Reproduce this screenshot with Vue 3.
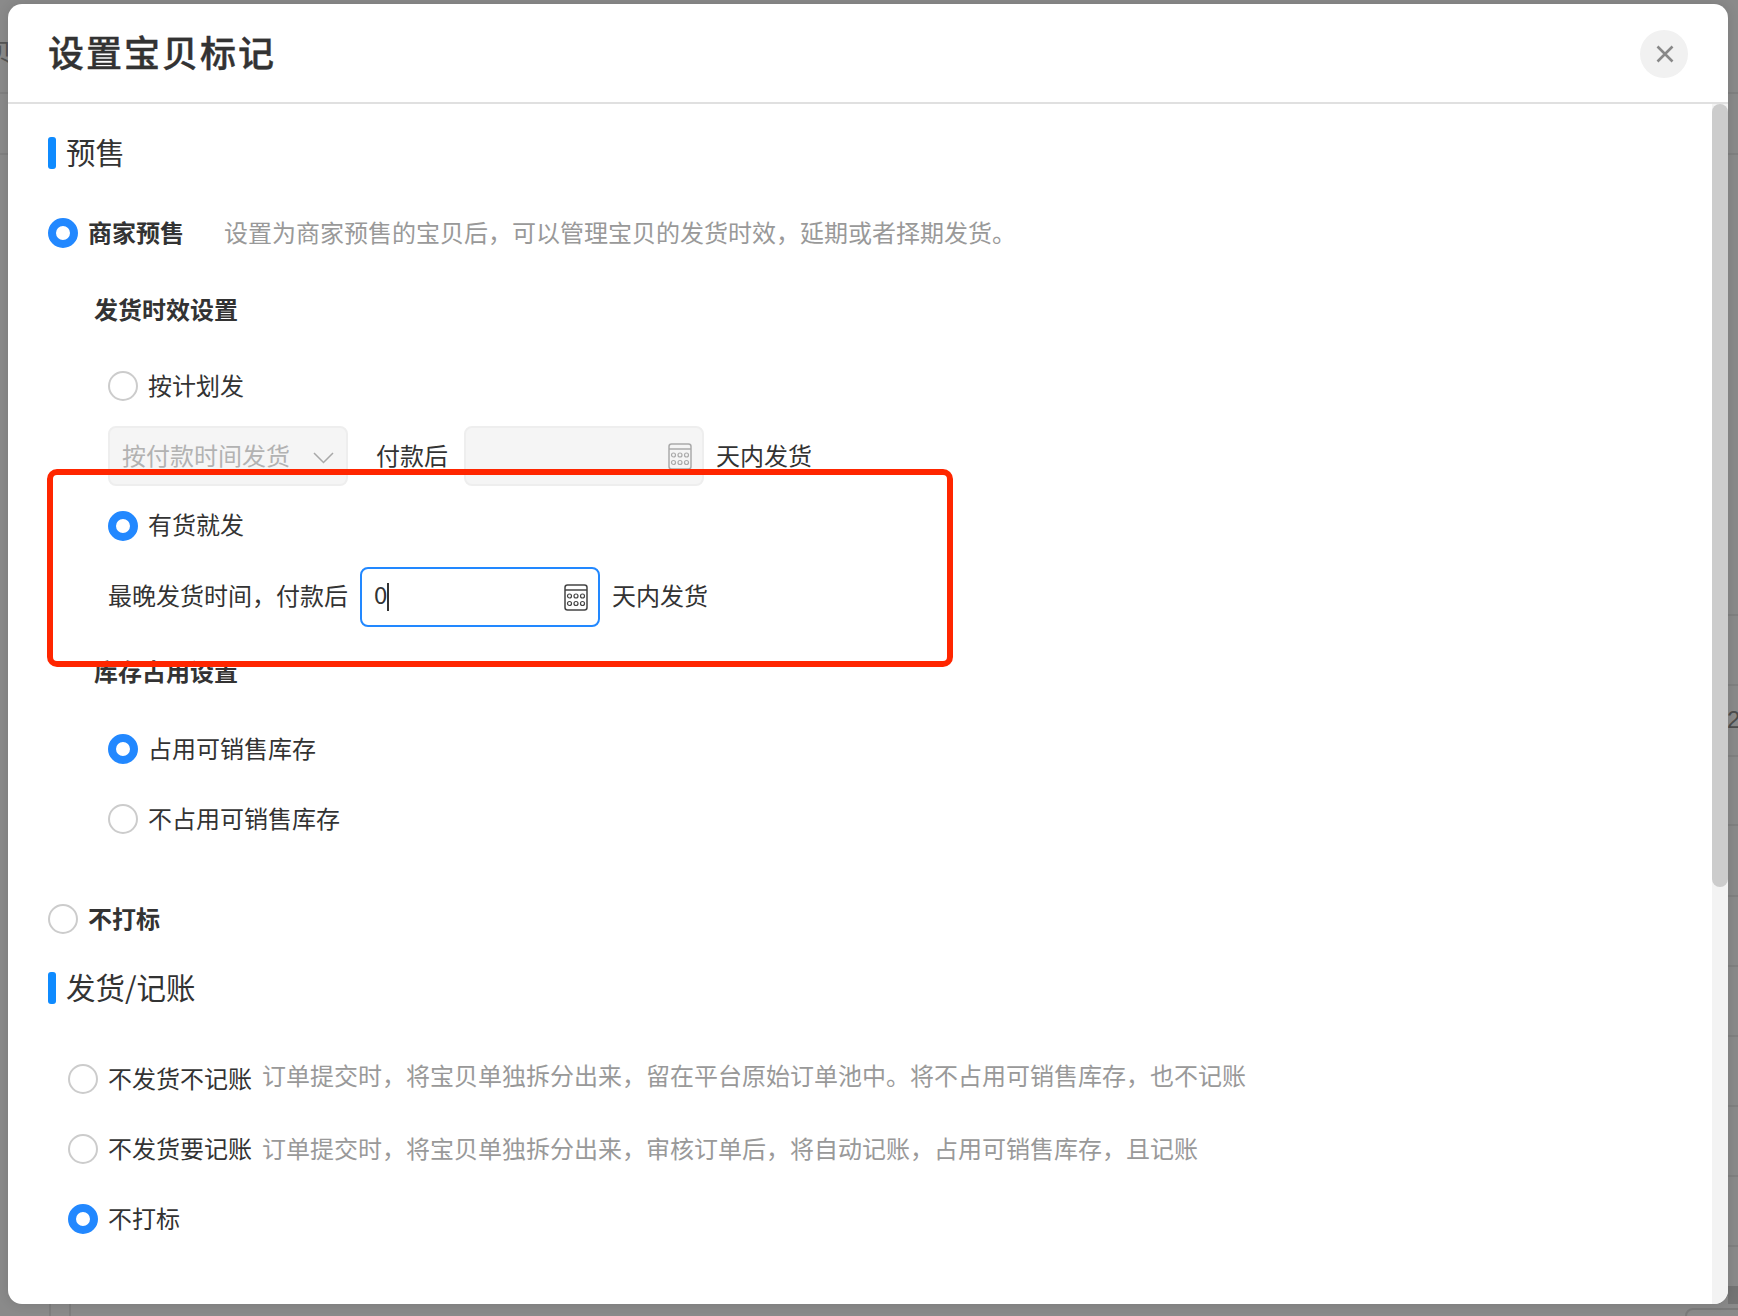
<script setup>
const fullLines = [92, 153]
const rightLines = [614, 684, 755, 824, 895, 965, 1035, 1105, 1175, 1245]
</script>

<template>
  <div class="page">
    <div class="backdrop">
      <div v-for="y in fullLines" :key="y" class="bg-line" :style="{ top: y + 'px' }"></div>
      <div v-for="y in rightLines" :key="y" class="bg-line right" :style="{ top: y + 'px' }"></div>
      <span class="bg-left">贝</span>
      <span class="bg-right">2</span>
      <div class="bg-band"></div>
      <div class="bg-vline one"></div>
      <div class="bg-vline two"></div>
      <div class="bg-box"></div>
    </div>

    <div class="modal">
      <header class="head">
        <h1 class="title">设置宝贝标记</h1>
        <div class="close">
          <svg width="18" height="18" viewBox="0 0 18 18"><path d="M1.500 1.500l15 15M16.500 1.500l-15 15" stroke="#888" stroke-width="2.600" fill="none"/></svg>
        </div>
      </header>

      <div class="body">
        <div class="content">
          <h2 class="section first"><i class="bar"></i><span>预售</span></h2>

          <div class="row merchant flat">
            <span class="radio on"></span>
            <b class="strong">商家预售</b>
            <span class="desc intro">设置为商家预售的宝贝后，可以管理宝贝的发货时效，延期或者择期发货。</span>
          </div>

          <div class="sub ship-title">发货时效设置</div>

          <div class="group">
            <div class="row plan flat"><span class="radio"></span><span>按计划发</span></div>
            <div class="fields disabled-row">
              <div class="select">
                <span>按付款时间发货</span>
                <svg class="chev" width="21" height="12" viewBox="0 0 21 12"><path d="M1 1l9.500 9.500L20 1" stroke="#a8a8a8" stroke-width="1.500" fill="none"/></svg>
              </div>
              <span class="after-select">付款后</span>
              <div class="box disabled">
                <svg class="cal" width="24" height="27" viewBox="0 0 24 27" fill="none" stroke="#aaa" stroke-width="1.500"><rect x="1" y="1" width="22" height="25" rx="2.500"/><path d="M1 6h22"/><circle cx="5.500" cy="12" r="2" stroke-width="1.200"/><circle cx="12" cy="12" r="2" stroke-width="1.200"/><circle cx="18.500" cy="12" r="2" stroke-width="1.200"/><circle cx="5.500" cy="19.500" r="2" stroke-width="1.200"/><circle cx="12" cy="19.500" r="2" stroke-width="1.200"/><circle cx="18.500" cy="19.500" r="2" stroke-width="1.200"/></svg>
              </div>
              <span class="tail">天内发货</span>
            </div>

            <div class="row instock"><span class="radio on"></span><span>有货就发</span></div>
            <div class="fields latest">
              <span>最晚发货时间，付款后</span>
              <div class="box focus">
                <span class="value">0</span><i class="caret"></i>
                <svg class="cal" width="24" height="27" viewBox="0 0 24 27" fill="none" stroke="#444" stroke-width="1.500"><rect x="1" y="1" width="22" height="25" rx="2.500"/><path d="M1 6h22"/><circle cx="5.500" cy="12" r="2" stroke-width="1.200"/><circle cx="12" cy="12" r="2" stroke-width="1.200"/><circle cx="18.500" cy="12" r="2" stroke-width="1.200"/><circle cx="5.500" cy="19.500" r="2" stroke-width="1.200"/><circle cx="12" cy="19.500" r="2" stroke-width="1.200"/><circle cx="18.500" cy="19.500" r="2" stroke-width="1.200"/></svg>
              </div>
              <span class="tail">天内发货</span>
            </div>
          </div>

          <div class="sub stock-title">库存占用设置</div>

          <div class="group">
            <div class="row stock-a"><span class="radio on"></span><span>占用可销售库存</span></div>
            <div class="row stock-b"><span class="radio"></span><span>不占用可销售库存</span></div>
          </div>

          <div class="row nomark"><span class="radio"></span><b class="strong">不打标</b></div>

          <h2 class="section second"><i class="bar"></i><span>发货/记账</span></h2>

          <div class="acct">
            <div class="row acct-a">
              <span class="radio"></span><span>不发货不记账</span>
              <span class="desc note lift">订单提交时，将宝贝单独拆分出来，留在平台原始订单池中。将不占用可销售库存，也不记账</span>
            </div>
            <div class="row acct-b">
              <span class="radio"></span><span>不发货要记账</span>
              <span class="desc note">订单提交时，将宝贝单独拆分出来，审核订单后，将自动记账，占用可销售库存，且记账</span>
            </div>
            <div class="row acct-b"><span class="radio on"></span><span>不打标</span></div>
          </div>
        </div>

        <div class="track"><div class="thumb"></div></div>
      </div>

      <div class="callout"></div>
    </div>
  </div>
</template>

<style>
html, body { margin: 0; background: #8a8a8a; }
</style>

<style scoped>
.page {
  position: relative;
  width: 1738px;
  height: 1316px;
  box-sizing: border-box;
  padding: 4px 10px 12px 8px;
  overflow: hidden;
  background: #8a8a8a;
  font-family: "Noto Sans CJK SC", "Liberation Sans", sans-serif;
  font-size: 24px;
  color: #333;
}
.backdrop { position: absolute; inset: 0; }
.bg-line { position: absolute; left: 0; right: 0; height: 2px; background: #808080; }
.bg-line.right { left: 1728px; }
.bg-left { position: absolute; left: -12px; top: 36px; color: #555; font-size: 24px; line-height: 30px; }
.bg-right { position: absolute; left: 1727px; top: 705px; color: #4d4d4d; font: 24px/30px "Liberation Sans", sans-serif; }
.bg-band { position: absolute; left: 1728px; right: 0; top: 1286px; height: 18px; background: #747474; }
.bg-vline { position: absolute; top: 1304px; bottom: 0; width: 2px; background: #7e7e7e; }
.bg-vline.one { left: 49px; }
.bg-vline.two { left: 69px; }
.bg-box { position: absolute; left: 1685px; top: 1308px; width: 70px; height: 30px; border: 2px solid #7a7a7a; border-radius: 8px; }

.modal {
  position: relative;
  width: 1720px;
  height: 1300px;
  display: flex;
  flex-direction: column;
  background: #fff;
  border-radius: 14px;
  overflow: hidden;
  box-shadow: 0 0 12px rgba(0, 0, 0, 0.12);
}
.head {
  flex: none;
  height: 98px;
  box-sizing: content-box;
  border-bottom: 2px solid #e0e0e0;
  padding: 0 40px;
  display: flex;
  align-items: center;
  justify-content: space-between;
}
.title {
  margin: 0 0 4px;
  font-size: 36px;
  font-weight: 500;
  letter-spacing: 2px;
  color: #333;
  -webkit-text-stroke: 0.4px #333;
}
.close {
  width: 48px;
  height: 48px;
  margin-top: 2px;
  border-radius: 50%;
  background: #f1f1f1;
  display: flex;
  align-items: center;
  justify-content: center;
}
.close svg { margin-left: 2px; }
.body { position: relative; flex: 1; overflow: hidden; }
.content { padding-left: 40px; }
.section {
  margin: 0;
  height: 32px;
  display: flex;
  align-items: center;
  gap: 10px;
  font-size: 29.5px;
  font-weight: 400;
  line-height: 32px;
}
.section > span { margin-bottom: 5px; }
.section.first { margin-top: 33px; }
.section.second { margin-top: 38px; }
.bar { width: 8px; height: 32px; border-radius: 3px; background: #0f8bff; }
.row { display: flex; align-items: center; height: 30px; line-height: 30px; white-space: nowrap; }
.row > :not(.radio) { margin-bottom: 3px; }
.row.flat > :not(.radio) { margin-bottom: 2px; }
.row.instock > :not(.radio) { margin-bottom: 5px; }
.radio {
  flex: none;
  box-sizing: border-box;
  width: 30px;
  height: 30px;
  margin-right: 10px;
  border: 2px solid #ccc;
  border-radius: 50%;
  background: #fff;
}
.radio.on { border: 8px solid #2288ff; }
.strong { font-weight: 700; }
.desc { color: #999; }
.intro { margin-left: 40px; }
.note { margin-left: 10px; }
.row > .note.lift { margin-bottom: 9px; }
.merchant { margin-top: 49px; }
.sub { margin-left: 46px; font-weight: 700; line-height: 30px; height: 30px; }
.ship-title { margin-top: 46px; }
.stock-title { margin-top: 29px; }
.group { margin-left: 60px; }
.plan { margin-top: 47px; }
.fields { display: flex; align-items: center; white-space: nowrap; }
.disabled-row { margin-top: 25px; }
.disabled-row .select > span,
.disabled-row > span { margin-bottom: 4px; }
.instock { margin-top: 25px; }
.latest { margin-top: 26px; }
.latest > span, .latest .value { margin-bottom: 6px; }
.select, .box {
  position: relative;
  box-sizing: border-box;
  width: 240px;
  height: 60px;
  border-radius: 8px;
}
.select {
  display: flex;
  align-items: center;
  justify-content: space-between;
  padding: 0 12px;
  background: #f5f5f5;
  border: 2px solid #eee;
  color: #b2b2b2;
}
.chev { margin-top: 4px; }
.after-select { margin: 0 16px 0 28px; }
.box.disabled { background: #f5f5f5; border: 2px solid #eee; }
.box.focus { margin-left: 12px; border: 2px solid #2288ff; padding-left: 12px; display: flex; align-items: center; }
.value { line-height: 30px; }
.caret { width: 2px; height: 28px; background: #333; }
.cal { position: absolute; right: 10px; top: 15px; }
.tail { margin-left: 12px; }
.stock-a { margin-top: 48px; }
.stock-b { margin-top: 40px; }
.nomark { margin-top: 70px; }
.acct { margin-left: 20px; }
.acct-a { margin-top: 60px; }
.acct-b { margin-top: 40px; }
.track { position: absolute; right: 0; top: 0; bottom: 0; width: 16px; background: #f3f3f3; }
.thumb { width: 16px; height: 783px; border-radius: 8px; background: #ccc; }
.callout {
  position: absolute;
  left: 39px;
  top: 465px;
  width: 906px;
  height: 198px;
  box-sizing: border-box;
  border: 6px solid #ff2600;
  border-radius: 10px;
  pointer-events: none;
}
</style>
